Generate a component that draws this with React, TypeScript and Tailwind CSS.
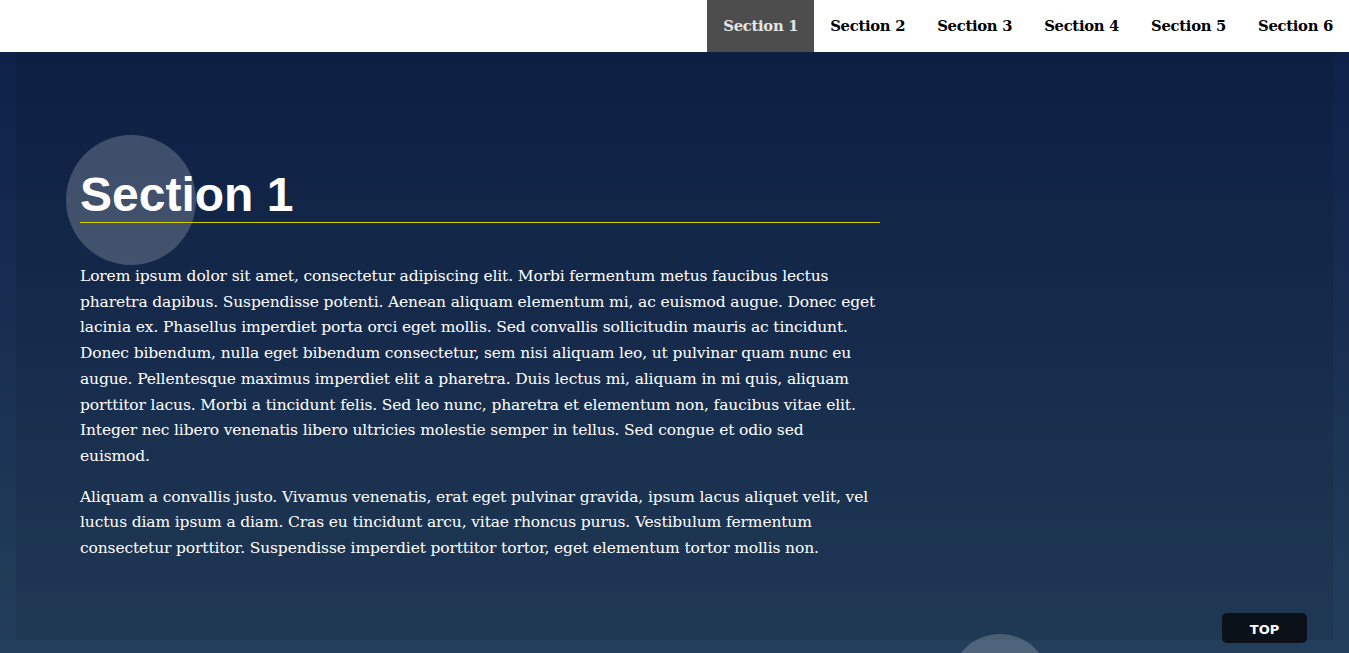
const sections = ["Section 1", "Section 2", "Section 3", "Section 4", "Section 5", "Section 6"];

function Nav() {
  return (
    <header className="h-[52px] bg-white flex justify-end">
      <nav className="flex h-full">
        {sections.map((s, i) => (
          <a
            key={s}
            href={`#s${i + 1}`}
            className={`flex items-center px-4 h-full text-[14.8px] font-bold tracking-[-0.3px] ${
              i === 0 ? "bg-[#4d4d4d] text-[#e6e6e6]" : "text-black"
            }`}
          >
            {s}
          </a>
        ))}
      </nav>
    </header>
  );
}

export default function App() {
  return (
    <div
      className="min-h-[653px] overflow-hidden bg-white"
      style={{ fontFamily: '"DejaVu Serif", serif' }}
    >
      <Nav />
      <main className="relative h-[601px] bg-gradient-to-b from-[#0f2149] to-[#233e5b] px-4">
        <section className="relative h-[588px] bg-black/[0.07] px-16 pt-[115px]">
          {/* decorative bubble behind the title */}
          <div className="absolute left-[50px] top-[83px] w-[130px] h-[130px] rounded-full bg-white/20" />
          <h1
            className="relative w-[800px] text-[48px] font-bold text-white leading-[55px] border-b border-[#d4d000]"
            style={{ fontFamily: '"Liberation Sans", Arial, sans-serif' }}
          >
            Section 1
          </h1>
          <div className="w-[796.5px] mt-[41px] text-[15.5px] tracking-[-0.14px] leading-[25.7px] text-white flex flex-col gap-[15px]">
            <p>
              Lorem ipsum dolor sit amet, consectetur adipiscing elit. Morbi fermentum metus faucibus lectus pharetra dapibus. Suspendisse potenti. Aenean aliquam elementum mi, ac euismod augue. Donec eget lacinia ex. Phasellus imperdiet porta orci eget mollis. Sed convallis sollicitudin mauris ac tincidunt. Donec bibendum, nulla eget bibendum consectetur, sem nisi aliquam leo, ut pulvinar quam nunc eu augue. Pellentesque maximus imperdiet elit a pharetra. Duis lectus mi, aliquam in mi quis, aliquam porttitor lacus. Morbi a tincidunt felis. Sed leo nunc, pharetra et elementum non, faucibus vitae elit. Integer nec libero venenatis libero ultricies molestie semper in tellus. Sed congue et odio sed euismod.
            </p>
            <p>
              Aliquam a convallis justo. Vivamus venenatis, erat eget pulvinar gravida, ipsum lacus aliquet velit, vel luctus diam ipsum a diam. Cras eu tincidunt arcu, vitae rhoncus purus. Vestibulum fermentum consectetur porttitor. Suspendisse imperdiet porttitor tortor, eget elementum tortor mollis non.
            </p>
          </div>
        </section>
        {/* bubble of the next section peeking in */}
        <div className="absolute left-[950px] top-[582px] w-[100px] h-[100px] rounded-full bg-white/20" />
      </main>
      <button
        className="fixed right-[42px] bottom-[10px] w-[85px] h-[30px] pt-[3px] rounded-[5px] bg-[#0b1119] text-white text-[13px] font-bold"
        style={{ fontFamily: '"DejaVu Sans", sans-serif' }}
      >
        TOP
      </button>
    </div>
  );
}
